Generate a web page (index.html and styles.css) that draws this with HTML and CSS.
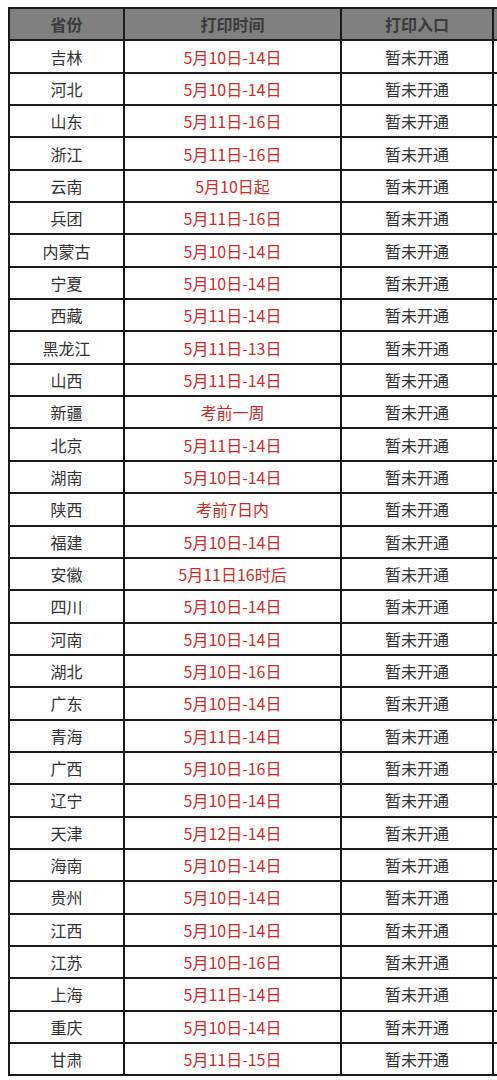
FILE: index.html
```html
<!DOCTYPE html>
<html lang="zh-CN">
<head>
<meta charset="utf-8">
<title>准考证打印时间</title>
<link rel="stylesheet" href="styles.css">
</head>
<body>
<div class="sheet">
<table class="grid">
<colgroup><col class="c1"><col class="c2"><col class="c3"><col class="c4"></colgroup>
<thead>
<tr><th>省份</th><th>打印时间</th><th>打印入口</th><th></th></tr>
</thead>
<tbody>
<tr><td>吉林</td><td class="date">5月10日-14日</td><td>暂未开通</td><td></td></tr>
<tr><td>河北</td><td class="date">5月10日-14日</td><td>暂未开通</td><td></td></tr>
<tr><td>山东</td><td class="date">5月11日-16日</td><td>暂未开通</td><td></td></tr>
<tr><td>浙江</td><td class="date">5月11日-16日</td><td>暂未开通</td><td></td></tr>
<tr><td>云南</td><td class="date">5月10日起</td><td>暂未开通</td><td></td></tr>
<tr><td>兵团</td><td class="date">5月11日-16日</td><td>暂未开通</td><td></td></tr>
<tr><td>内蒙古</td><td class="date">5月10日-14日</td><td>暂未开通</td><td></td></tr>
<tr><td>宁夏</td><td class="date">5月10日-14日</td><td>暂未开通</td><td></td></tr>
<tr><td>西藏</td><td class="date">5月11日-14日</td><td>暂未开通</td><td></td></tr>
<tr><td>黑龙江</td><td class="date">5月11日-13日</td><td>暂未开通</td><td></td></tr>
<tr><td>山西</td><td class="date">5月11日-14日</td><td>暂未开通</td><td></td></tr>
<tr><td>新疆</td><td class="date">考前一周</td><td>暂未开通</td><td></td></tr>
<tr><td>北京</td><td class="date">5月11日-14日</td><td>暂未开通</td><td></td></tr>
<tr><td>湖南</td><td class="date">5月10日-14日</td><td>暂未开通</td><td></td></tr>
<tr><td>陕西</td><td class="date">考前7日内</td><td>暂未开通</td><td></td></tr>
<tr><td>福建</td><td class="date">5月10日-14日</td><td>暂未开通</td><td></td></tr>
<tr><td>安徽</td><td class="date">5月11日16时后</td><td>暂未开通</td><td></td></tr>
<tr><td>四川</td><td class="date">5月10日-14日</td><td>暂未开通</td><td></td></tr>
<tr><td>河南</td><td class="date">5月10日-14日</td><td>暂未开通</td><td></td></tr>
<tr><td>湖北</td><td class="date">5月10日-16日</td><td>暂未开通</td><td></td></tr>
<tr><td>广东</td><td class="date">5月10日-14日</td><td>暂未开通</td><td></td></tr>
<tr><td>青海</td><td class="date">5月11日-14日</td><td>暂未开通</td><td></td></tr>
<tr><td>广西</td><td class="date">5月10日-16日</td><td>暂未开通</td><td></td></tr>
<tr><td>辽宁</td><td class="date">5月10日-14日</td><td>暂未开通</td><td></td></tr>
<tr><td>天津</td><td class="date">5月12日-14日</td><td>暂未开通</td><td></td></tr>
<tr><td>海南</td><td class="date">5月10日-14日</td><td>暂未开通</td><td></td></tr>
<tr><td>贵州</td><td class="date">5月10日-14日</td><td>暂未开通</td><td></td></tr>
<tr><td>江西</td><td class="date">5月10日-14日</td><td>暂未开通</td><td></td></tr>
<tr><td>江苏</td><td class="date">5月10日-16日</td><td>暂未开通</td><td></td></tr>
<tr><td>上海</td><td class="date">5月11日-14日</td><td>暂未开通</td><td></td></tr>
<tr><td>重庆</td><td class="date">5月10日-14日</td><td>暂未开通</td><td></td></tr>
<tr><td>甘肃</td><td class="date">5月11日-15日</td><td>暂未开通</td><td></td></tr>
</tbody>
</table>
</div>
</body>
</html>
```
FILE: styles.css
```css
html, body {
  margin: 0;
  padding: 0;
  background: #fff;
}
body {
  font-family: "Noto Sans CJK SC", "Noto Sans", sans-serif;
  color: #333;
  overflow: hidden;
}
.sheet {
  width: 497px;
  overflow: hidden;
  padding: 7px 0 0 8px;
  box-sizing: border-box;
}
.grid {
  border-collapse: collapse;
  table-layout: fixed;
  width: 544px;
}
.c1 { width: 115px; }
.c2 { width: 217px; }
.c3 { width: 152px; }
.c4 { width: 60px; }
.grid th,
.grid td {
  border: 2px solid #1a1a1a;
  height: 32.35px;
  padding: 0;
  text-align: center;
  vertical-align: middle;
  font-size: 16px;
  line-height: 1;
  box-sizing: border-box;
}
.grid th {
  background: #808080;
  color: #3a3a3a;
  font-weight: bold;
}
.grid td.date {
  color: #cf2a2a;
}
```
